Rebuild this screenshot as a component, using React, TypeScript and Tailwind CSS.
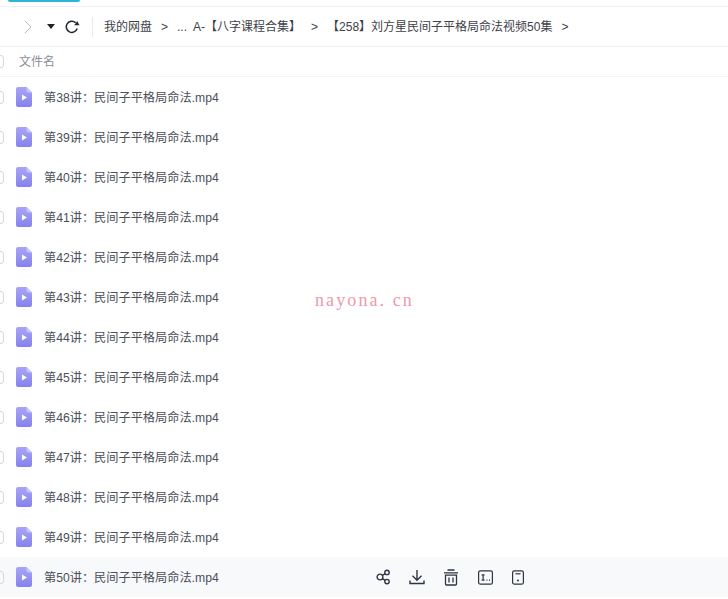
import { ChevronLeft, ChevronRight } from 'lucide-react';

const files = [38, 39, 40, 41, 42, 43, 44, 45, 46, 47, 48, 49, 50];

const FileIcon = () => (
  <svg width="16" height="20" viewBox="0 0 16 20" className="shrink-0">
    <defs>
      <linearGradient id="fileFill" x1="0" y1="0" x2="0" y2="1">
        <stop offset="0" stopColor="#a8a5f6" />
        <stop offset="1" stopColor="#8682ee" />
      </linearGradient>
    </defs>
    <path d="M2 0h8.5L16 5.5V18a2 2 0 0 1-2 2H2a2 2 0 0 1-2-2V2a2 2 0 0 1 2-2z" fill="url(#fileFill)" />
    <path d="M10.5 0L16 5.5h-3.5a2 2 0 0 1-2-2z" fill="#c5c3fa" />
    <path d="M6 7.5l5 3-5 3z" fill="#fff" />
  </svg>
);

const RefreshIcon = () => (
  <svg width="16" height="16" viewBox="0 0 16 16" fill="none" className="ml-[9px]">
    <path d="M13.2 9.5A5.6 5.6 0 1 1 11.6 3.6" stroke="#23272f" strokeWidth="1.5" />
    <path d="M10.2 6.2h5.3L13.2 2z" fill="#23272f" />
  </svg>
);

const ShareIcon = () => (
  <svg width="15" height="16" viewBox="0 0 15 16" fill="none" stroke="#2f3542" strokeWidth="1.4">
    <circle cx="4" cy="8" r="2.9" />
    <circle cx="11" cy="3.4" r="2.2" />
    <circle cx="11" cy="12.6" r="2.2" />
    <path d="M6.4 6.4l2.8-1.8M6.4 9.6l2.8 1.8" />
  </svg>
);

const SaveIcon = () => (
  <svg width="16" height="16" viewBox="0 0 16 16" fill="none" stroke="#2f3542" strokeWidth="1.4">
    <path d="M8 1v10M3.5 6.8L8 11.2l4.5-4.4" />
    <path d="M1 11.5v3h14v-3" />
  </svg>
);

const TrashIcon = () => (
  <svg width="16" height="17" viewBox="0 0 16 17" fill="none" stroke="#2f3542" strokeWidth="1.3">
    <path d="M4.5 1h7M1 3.8h14" />
    <path d="M2.5 6.2h11V15a1 1 0 0 1-1 1h-9a1 1 0 0 1-1-1z" />
    <path d="M6 8.5v5M10 8.5v5" />
  </svg>
);

const RenameIcon = () => (
  <svg width="15" height="15" viewBox="0 0 15 15" fill="none" stroke="#2f3542" strokeWidth="1.2" className="ml-px">
    <rect x="0.6" y="0.8" width="13.8" height="13.4" rx="1.8" />
    <path d="M3.6 4.8h3M5.1 4.8v5.4M3.6 10.2h3" />
    <path d="M8.5 10.2h1M11 10.2h1" />
  </svg>
);

const PhoneIcon = () => (
  <svg width="12" height="15" viewBox="0 0 12 15" fill="none" stroke="#2f3542" strokeWidth="1.2" className="ml-px">
    <rect x="0.6" y="0.8" width="10.8" height="13.4" rx="1.8" />
    <path d="M3.5 3.8h5" />
    <circle cx="6" cy="10.6" r="1" fill="#2f3542" stroke="none" />
  </svg>
);

export default function App() {
  return (
    <div className="h-[599px] w-[728px] overflow-hidden bg-white font-['Liberation_Sans','Noto_Sans_CJK_SC',sans-serif] text-[12.2px] text-[#4b4f57]">
      <div className="h-[7px] border-b border-[#eeeff1] pl-[8px]">
        <div className="h-[2px] w-[72px] rounded-b bg-[#2fb3d6]" />
      </div>

      {/* 路径栏 */}
      <div className="flex h-[40px] items-center border-b border-[#f0f1f3]">
        <ChevronLeft size={20} strokeWidth={1.3} className="ml-[-14px] text-[#555a63]" />
        <ChevronRight size={24} strokeWidth={1} className="ml-[10px] text-[#b8bcc4]" />
        <span className="ml-[7px] h-0 w-0 border-x-[4px] border-t-[5px] border-x-transparent border-t-[#1f2329]" />
        <RefreshIcon />
        <div className="ml-[12px] h-[20px] w-px bg-[#e8e9ec]" />
        <div className="ml-[11px] flex items-center text-[12px] text-[#3d4148]">
          <span>我的网盘</span>
          <span className="ml-[9px]">&gt;</span>
          <span className="ml-[9px]">...</span>
          <span className="ml-[6px]">A-【八字课程合集】</span>
          <span className="ml-[10px]">&gt;</span>
          <span className="ml-[9px]">【258】刘方星民间子平格局命法视频50集</span>
          <span className="ml-[9px]">&gt;</span>
        </div>
      </div>

      {/* 表头 */}
      <div className="flex h-[30px] items-center border-b border-[#f3f4f6] text-[#8a8f99]">
        <span className="ml-[-9px] h-[13px] w-[13px] rounded-[3px] border border-[#d5d8dd]" />
        <span className="ml-[15px] text-[12px]">文件名</span>
      </div>

      {/* 文件列表 */}
      <div className="relative">
        {files.map((n) => (
          <div key={n} className={`flex h-[40px] items-center ${n === 50 ? 'bg-[#f8f9fb]' : ''}`}>
            <span className="ml-[-9px] h-[13px] w-[13px] rounded-[3px] border border-[#d5d8dd]" />
            <span className="ml-[12px]"><FileIcon /></span>
            <span className="ml-[12px] pt-[3px]">第{n}讲：民间子平格局命法.mp4</span>
            {n === 50 && (
              <div className="ml-[157px] flex items-center gap-[18px]">
                <ShareIcon />
                <SaveIcon />
                <TrashIcon />
                <RenameIcon />
                <PhoneIcon />
              </div>
            )}
          </div>
        ))}
        <span className="absolute left-[315px] top-[210px] font-['Liberation_Serif',serif] text-[18px] tracking-[2.1px] text-[#ee9aa8]">nayona. cn</span>
      </div>
    </div>
  );
}
